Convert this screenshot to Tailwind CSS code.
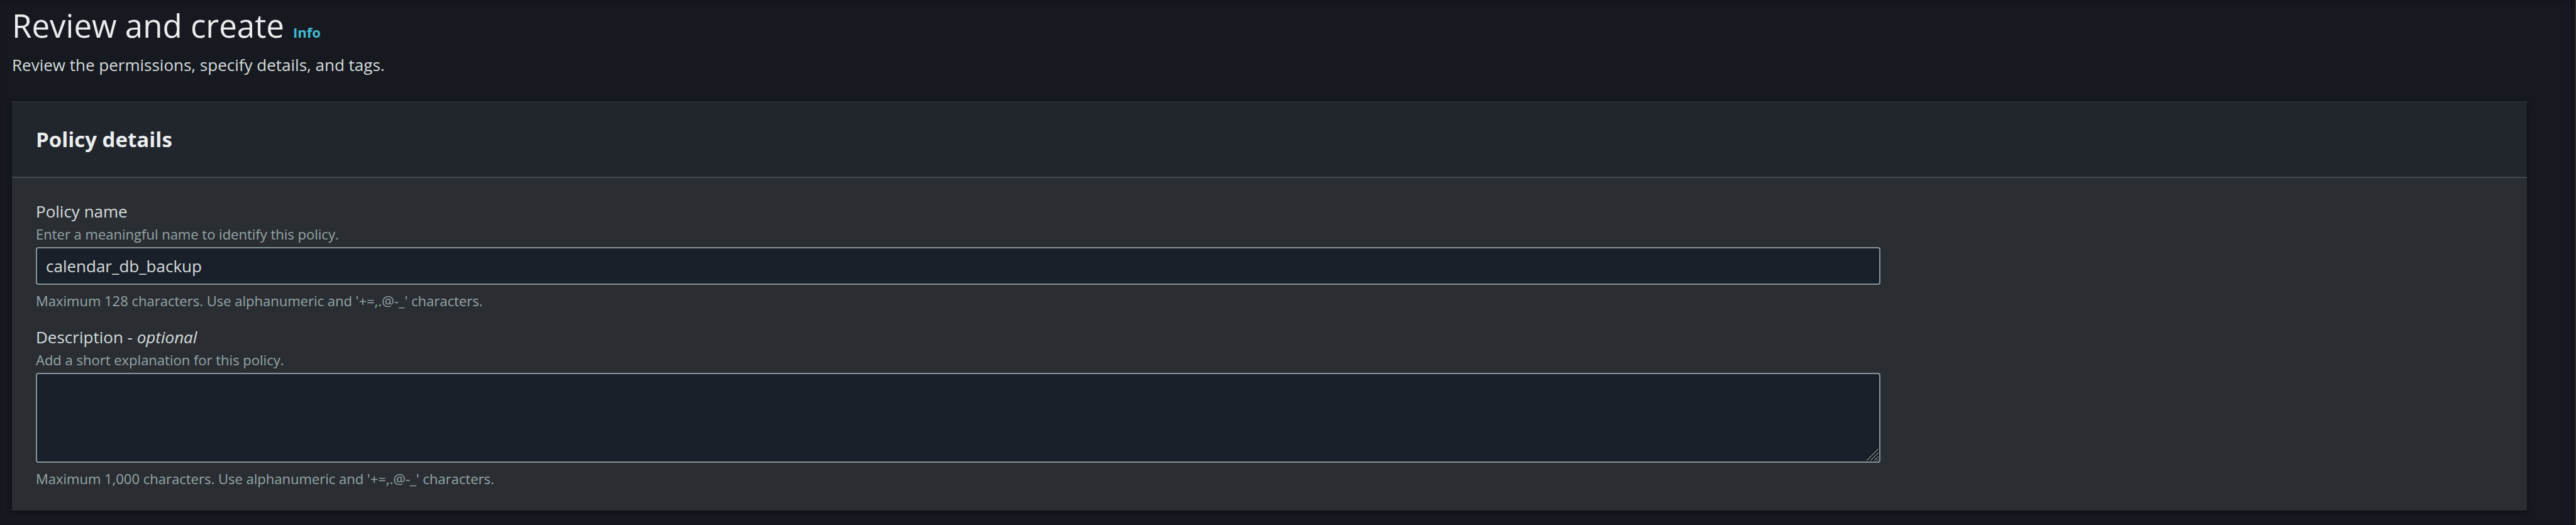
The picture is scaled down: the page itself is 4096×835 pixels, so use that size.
<!DOCTYPE html>
<html lang="en">
<head>
<meta charset="utf-8">
<title>Review and create</title>
<script src="https://cdn.jsdelivr.net/npm/@tailwindcss/browser@4"></script>
</head>
<body class="min-h-screen border-r-2 border-[#2e2e2e] bg-[#161920] font-['Open_Sans','Noto_Sans',sans-serif] text-[#d5dbdb] shadow-[inset_-4px_0_6px_#0f1216]">
<main class="pl-[19px] pr-[76px] pt-1.5 pb-[22px]">
  <header>
    <div class="flex items-baseline gap-3.5">
      <h1 class="text-[51px] leading-[68px] text-[#eaeded]">Review and create</h1>
      <a href="#info" class="text-[22px] leading-8 font-bold text-[#44b9d6]">Info</a>
    </div>
    <p class="mt-2.5 text-[26px] leading-[38px]">Review the permissions, specify details, and tags.</p>
  </header>
  <section class="mt-[39px] bg-[#2a2e33] shadow-[0_2px_6px_#0b0d10]">
    <div class="border-t-2 border-b-2 border-t-[#2a2e33] border-b-[#414750] bg-[#21252c] px-[38px] py-[38px]">
      <h2 class="text-[33px] leading-[42px] font-bold text-[#eaeded]">Policy details</h2>
    </div>
    <form class="grid grid-cols-4 gap-x-9 gap-y-[22px] px-[38px] py-[34px]">
      <div class="col-span-3">
        <label for="policy-name" class="block text-[26px] leading-[38px]">Policy name</label>
        <p class="mb-1 text-[22px] leading-[34px] text-[#95a5a6]">Enter a meaningful name to identify this policy.</p>
        <input id="policy-name" type="text" value="calendar_db_backup" class="block h-[60px] w-full rounded-sm border-2 border-[#879596] bg-[#1a2029] px-3.5 text-[26px] outline-none">
        <p class="mt-2 text-[22px] leading-[34px] text-[#95a5a6]">Maximum 128 characters. Use alphanumeric and '+=,.@-_' characters.</p>
      </div>
      <div class="col-span-3">
        <label for="description" class="block text-[26px] leading-[38px]">Description - <i>optional</i></label>
        <p class="mb-1 text-[22px] leading-[34px] text-[#95a5a6]">Add a short explanation for this policy.</p>
        <div class="relative">
          <textarea id="description" class="block h-[143px] w-full resize-none rounded-sm border-2 border-[#879596] bg-[#1a2029] px-3.5 py-2 text-[26px] outline-none"></textarea>
          <svg class="pointer-events-none absolute right-[3px] bottom-[3px] size-5" viewBox="0 0 20 20" fill="none" aria-hidden="true">
            <path d="M0 18.5 18.5 0M6 18.5 18.5 6M12 18.5 18.5 12" stroke="#0d1015" stroke-width="1.5"/>
            <path d="M1 19.5 19.5 1M7 19.5 19.5 7M13 19.5 19.5 13M17.5 19.5 19.5 17.5" stroke="#8b8e92" stroke-width="1.2"/>
          </svg>
        </div>
        <p class="mt-2 text-[22px] leading-[34px] text-[#95a5a6]">Maximum 1,000 characters. Use alphanumeric and '+=,.@-_' characters.</p>
      </div>
    </form>
  </section>
</main>
</body>
</html>
